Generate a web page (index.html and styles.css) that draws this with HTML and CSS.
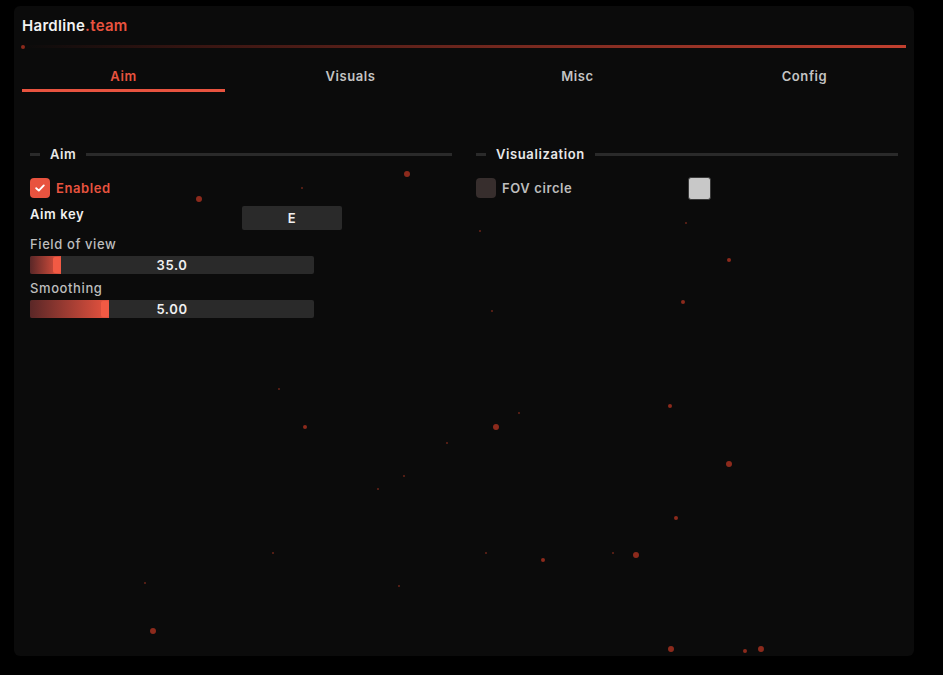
FILE: index.html
```html
<!DOCTYPE html>
<html lang="en">
<head>
    <meta charset="UTF-8">
    <title>Hardline.team</title>
    <link rel="stylesheet" href="styles.css">
</head>
<body>

<div class="window">
    <div class="particles">
        <span class="dot s" style="left:9px;top:41px"></span>
        <span class="dot l" style="left:393px;top:168px"></span>
        <span class="dot l" style="left:185px;top:193px"></span>
        <span class="dot xs" style="left:288px;top:182px"></span>
        <span class="dot xs" style="left:466px;top:225px"></span>
        <span class="dot xs" style="left:672px;top:217px"></span>
        <span class="dot m" style="left:715px;top:254px"></span>
        <span class="dot m" style="left:669px;top:296px"></span>
        <span class="dot xs" style="left:478px;top:305px"></span>
        <span class="dot xs" style="left:265px;top:383px"></span>
        <span class="dot xs" style="left:505px;top:407px"></span>
        <span class="dot m" style="left:656px;top:400px"></span>
        <span class="dot m" style="left:291px;top:421px"></span>
        <span class="dot l" style="left:482px;top:421px"></span>
        <span class="dot xs" style="left:433px;top:437px"></span>
        <span class="dot xs" style="left:390px;top:470px"></span>
        <span class="dot xs" style="left:364px;top:483px"></span>
        <span class="dot l" style="left:715px;top:458px"></span>
        <span class="dot m" style="left:662px;top:512px"></span>
        <span class="dot xs" style="left:259px;top:547px"></span>
        <span class="dot xs" style="left:472px;top:547px"></span>
        <span class="dot m" style="left:529px;top:554px"></span>
        <span class="dot xs" style="left:599px;top:547px"></span>
        <span class="dot l" style="left:622px;top:549px"></span>
        <span class="dot xs" style="left:131px;top:577px"></span>
        <span class="dot xs" style="left:385px;top:580px"></span>
        <span class="dot l" style="left:139px;top:625px"></span>
        <span class="dot l" style="left:657px;top:643px"></span>
        <span class="dot m" style="left:731px;top:645px"></span>
        <span class="dot l" style="left:747px;top:643px"></span>
    </div>

    <div class="title">Hardline<span class="accent">.team</span></div>
    <div class="title-line"></div>

    <div class="tabs">
        <div class="tab active">Aim</div>
        <div class="tab">Visuals</div>
        <div class="tab">Misc</div>
        <div class="tab">Config</div>
    </div>

    <div class="columns">
        <div class="column">
            <div class="section-head"><span>Aim</span></div>

            <div class="checkbox-row checked">
                <div class="check">
                    <span class="box">
                        <svg width="12" height="12" viewBox="0 0 12 12"><path d="M2.2 6.2 L4.8 8.6 L9.8 3.4" fill="none" stroke="#fff" stroke-width="1.9" stroke-linecap="round" stroke-linejoin="round"/></svg>
                    </span>
                    <span class="label">Enabled</span>
                </div>
            </div>

            <div class="key-row">
                <span class="label">Aim key</span>
                <div class="key-btn">E</div>
            </div>

            <div class="slider-label">Field of view</div>
            <div class="slider">
                <div class="fill" style="width:31px"></div>
                <span class="value">35.0</span>
            </div>

            <div class="slider-label">Smoothing</div>
            <div class="slider">
                <div class="fill" style="width:79px"></div>
                <span class="value">5.00</span>
            </div>
        </div>

        <div class="column">
            <div class="section-head"><span>Visualization</span></div>

            <div class="checkbox-row">
                <div class="check">
                    <span class="box"></span>
                    <span class="label">FOV circle</span>
                </div>
                <span class="swatch"></span>
            </div>
        </div>
    </div>
</div>

</body>
</html>
```

FILE: styles.css
```css
body {
    margin: 0;
    background-color: #000;
    font-family: 'Inter', 'Noto Sans', sans-serif;
    letter-spacing: 0.6px;
    color: #e6e6e6;
}

.window {
    position: relative;
    margin: 6px 0 0 14px;
    width: 900px;
    height: 650px;
    background-color: #0b0b0b;
    border-radius: 6px;
    padding: 0 8px;
    box-sizing: border-box;
    overflow: hidden;
}

.particles {
    position: absolute;
    inset: 0;
    pointer-events: none;
}

.dot {
    position: absolute;
    border-radius: 50%;
    background-color: #8c2a1c;
    transform: translate(-50%, -50%);
}

.dot.xs { width: 2px; height: 2px; background-color: #6a2418; }
.dot.s { width: 4px; height: 4px; }
.dot.m { width: 4px; height: 4px; }
.dot.l { width: 6px; height: 6px; }

.title {
    position: relative;
    padding-top: 10px;
    font-size: 15px;
    font-weight: 600;
    letter-spacing: 0.3px;
    color: #f2f2f2;
    height: 19px;
    line-height: 19px;
}

.title .accent {
    color: #e8533f;
}

.title-line {
    margin-top: 10px;
    height: 3px;
    background: linear-gradient(to right, rgba(200, 60, 45, 0) 0%, rgba(140, 40, 30, 0.35) 20%, #c2402f 100%);
}

.tabs {
    display: flex;
    gap: 24px;
    margin-top: 19px;
}

.tab {
    flex: 1;
    text-align: center;
    font-size: 13px;
    font-weight: 600;
    color: #c4c4c4;
    height: 22px;
    line-height: 18px;
    border-bottom: 3px solid transparent;
}

.tab.active {
    color: #e8533f;
    border-bottom-color: #e8533f;
}

.columns {
    display: flex;
    gap: 24px;
    padding: 0 8px;
    margin-top: 53px;
}

.column {
    flex: 1;
    position: relative;
}

.section-head {
    display: flex;
    align-items: center;
    height: 18px;
    font-size: 13px;
    font-weight: 600;
    color: #e8e8e8;
}

.section-head::before {
    content: '';
    width: 10px;
    height: 3px;
    background-color: #2a2a2a;
}

.section-head span {
    padding: 0 10px;
}

.section-head::after {
    content: '';
    flex: 1;
    height: 3px;
    background-color: #2a2a2a;
}

.checkbox-row {
    display: flex;
    align-items: center;
    margin-top: 15px;
    height: 20px;
    font-size: 13px;
    font-weight: 600;
    color: #bdbdbd;
}

.check {
    display: flex;
    align-items: center;
    width: 212px;
}

.check .box {
    width: 20px;
    height: 20px;
    border-radius: 4px;
    background-color: #372e2d;
    margin-right: 6px;
    display: flex;
    align-items: center;
    justify-content: center;
}

.checkbox-row.checked .box {
    background-color: #e8533f;
}

.checkbox-row.checked .label {
    color: #e8533f;
}

.swatch {
    width: 21px;
    height: 21px;
    border-radius: 3px;
    background-color: #c8c8c8;
    border: 1px solid #3a3a3a;
}

.key-row {
    display: flex;
    align-items: flex-start;
    margin-top: 8px;
    font-size: 13px;
    font-weight: 600;
    color: #f0f0f0;
}

.key-row .label {
    width: 212px;
    line-height: 16px;
}

.key-btn {
    width: 100px;
    height: 24px;
    line-height: 24px;
    text-align: center;
    background-color: #2a2a2a;
    border-radius: 2px;
    font-size: 13px;
}

.slider-label {
    margin-top: 6px;
    font-size: 13px;
    font-weight: 500;
    color: #bdbdbd;
    line-height: 16px;
}

.slider {
    position: relative;
    margin-top: 4px;
    width: 284px;
    height: 18px;
    background-color: #2a2a2a;
    border-radius: 2px;
    overflow: hidden;
}

.slider .fill {
    height: 100%;
    background: linear-gradient(to right, #5a2727, #e8533f);
    position: relative;
}

.slider .fill::after {
    content: '';
    position: absolute;
    right: 0;
    top: 1px;
    width: 8px;
    height: 16px;
    border-radius: 2px;
    background-color: #f25a44;
}

.slider .value {
    position: absolute;
    inset: 0;
    text-align: center;
    line-height: 18px;
    font-size: 13px;
    font-weight: 600;
    color: #f0f0f0;
}
```
